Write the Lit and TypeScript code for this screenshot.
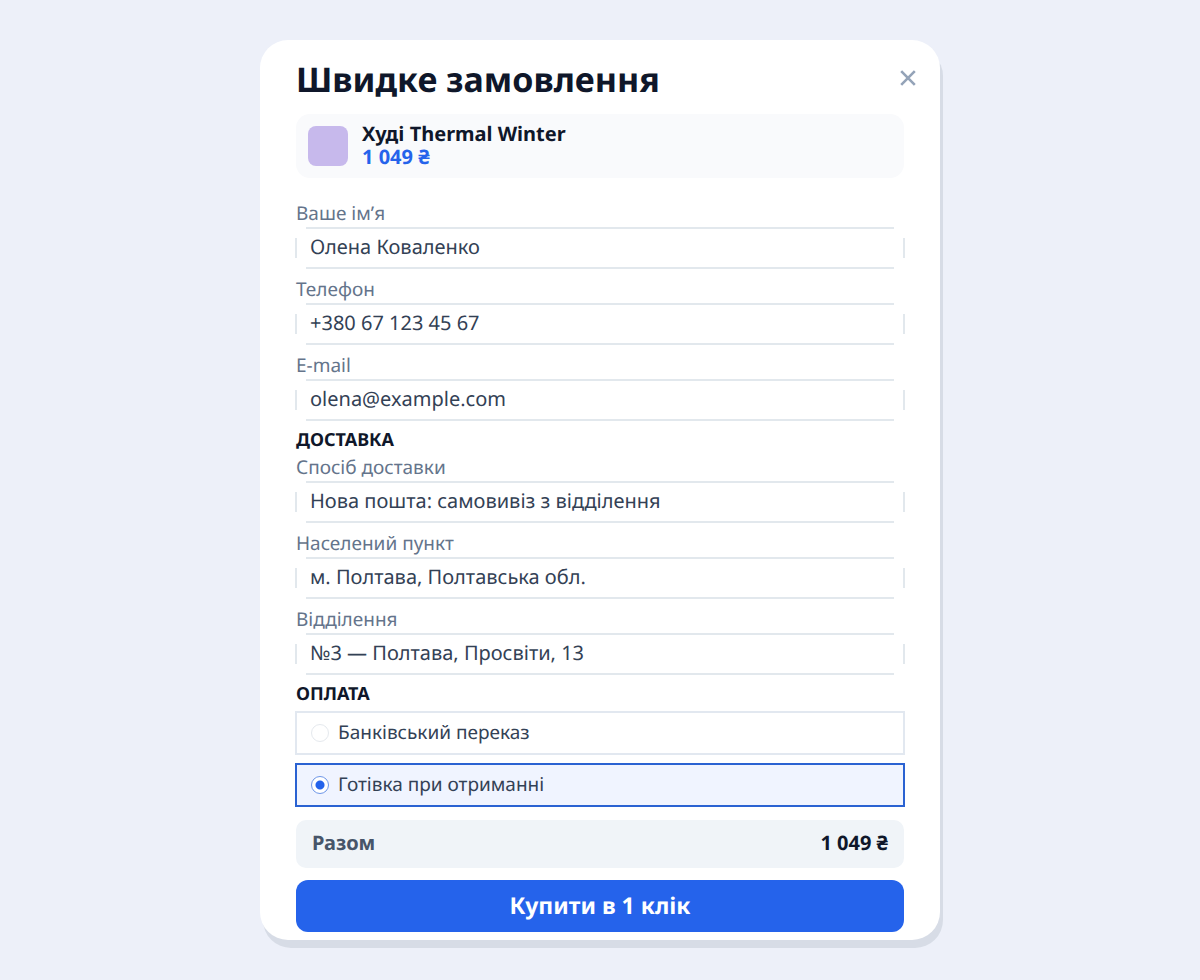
import { LitElement, html, css } from "lit";
import { customElement, property, state } from "lit/decorators.js";

@customElement("text-field")
class TextField extends LitElement {
  @property() label = "";
  @property() value = "";
  @property() type = "text";

  static styles = css`
    :host {
      display: block;
    }
    .label {
      display: block;
      padding: 8px 0 2px;
      font-size: 19px;
      line-height: 24px;
      color: #64748b;
    }
    .row {
      display: flex;
      margin: 0 -1px;
    }
    .input {
      flex: 1;
      min-width: 0;
      box-sizing: border-box;
      height: 42px;
      margin: 0;
      padding: 0 15px 4px;
      border: 0;
      border-radius: 10px;
      outline: 0;
      font: inherit;
      font-size: 20px;
      text-rendering: inherit;
      color: #334155;
      --line: linear-gradient(#e2e8ed, #e2e8ed);
      background:
        var(--line) center top / calc(100% - 22px) 2px no-repeat,
        var(--line) center bottom / calc(100% - 22px) 2px no-repeat,
        var(--line) left center / 2px 20px no-repeat,
        var(--line) right center / 2px 20px no-repeat;
    }
    .input:focus-visible {
      --line: linear-gradient(#2563eb, #2563eb);
    }
  `;

  render() {
    return html`
      <label class="label" for="control">${this.label}</label>
      <div class="row">
        <input class="input" id="control" type=${this.type} .value=${this.value} />
      </div>
    `;
  }
}

@customElement("app-root")
class AppRoot extends LitElement {
  @state() payment = "cash";

  contact = [
    { label: "Ваше ім’я", value: "Олена Коваленко", type: "text" },
    { label: "Телефон", value: "+380 67 123 45 67", type: "tel" },
    { label: "E-mail", value: "olena@example.com", type: "email" },
  ];

  delivery = [
    { label: "Спосіб доставки", value: "Нова пошта: самовивіз з відділення", type: "text" },
    { label: "Населений пункт", value: "м. Полтава, Полтавська обл.", type: "text" },
    { label: "Відділення", value: "№3 — Полтава, Просвіти, 13", type: "text" },
  ];

  payments = [
    { id: "bank", label: "Банківський переказ" },
    { id: "cash", label: "Готівка при отриманні" },
  ];

  static styles = css`
    :host {
      display: block;
      box-sizing: border-box;
      min-height: 100vh;
      padding: 40px 16px;
      background: #edf0f9;
      color: #0f172a;
      font-family: "Noto Sans", sans-serif;
      text-rendering: geometricPrecision;
    }
    .card {
      box-sizing: border-box;
      max-width: 680px;
      margin: 0 auto;
      padding: 19px 36px 8px;
      border-radius: 28px;
      background: #fff;
      box-shadow: 3px 8px 0 #d7dce6;
    }
    .header {
      display: flex;
      align-items: flex-start;
      justify-content: space-between;
      margin: 0 -16px 15px 0;
    }
    .title {
      margin: 0;
      font-size: 34px;
      line-height: 40px;
      font-weight: 700;
    }
    .close {
      display: flex;
      padding: 11px 4px;
      border: 0;
      background: none;
      color: #94a3b8;
      cursor: pointer;
    }
    .product {
      display: flex;
      align-items: center;
      gap: 14px;
      box-sizing: border-box;
      min-height: 64px;
      margin-bottom: 15px;
      padding: 0 12px;
      border-radius: 14px;
      background: #f9fafc;
    }
    .swatch {
      width: 40px;
      height: 40px;
      border-radius: 8px;
      background: #c7b9ec;
    }
    .info {
      padding-bottom: 2px;
      font-size: 20px;
      line-height: 23px;
      font-weight: 700;
    }
    .price {
      color: #2563eb;
    }
    .section {
      margin: 0;
      padding-top: 12px;
      font-size: 18px;
      line-height: 14px;
      font-weight: 700;
    }
    .payments {
      display: grid;
      gap: 8px;
      min-width: 0;
      margin: 10px -1px 13px;
      padding: 0;
      border: 0;
    }
    .option {
      display: flex;
      align-items: center;
      gap: 9px;
      box-sizing: border-box;
      height: 44px;
      padding: 0 14px;
      border: 2px solid #e2e8f0;
      font-size: 19px;
      color: #334155;
      cursor: pointer;
    }
    .option:has(.radio:checked) {
      border-color: #2a62d2;
      background: #f0f4ff;
    }
    .option-text {
      padding-bottom: 2px;
    }
    .radio {
      appearance: none;
      box-sizing: border-box;
      width: 18px;
      height: 18px;
      margin: 0;
      border: 1px solid #e5e9ee;
      border-radius: 50%;
      background: #fff;
    }
    .radio:checked {
      border-color: #6f97e8;
      background: radial-gradient(circle, #2563eb 4px, #fff 5px);
    }
    .total {
      display: flex;
      align-items: center;
      justify-content: space-between;
      box-sizing: border-box;
      height: 48px;
      margin-bottom: 12px;
      padding: 0 16px 3px;
      border-radius: 10px;
      background: #f0f4f8;
      font-size: 20px;
      font-weight: 700;
    }
    .total-label {
      color: #475569;
    }
    .buy {
      display: block;
      width: 100%;
      height: 52px;
      padding: 0 0 2px;
      border: 0;
      border-radius: 12px;
      background: #2563eb;
      color: #fff;
      font: inherit;
      font-size: 23px;
      font-weight: 700;
      text-rendering: inherit;
      cursor: pointer;
    }
  `;

  renderFields(fields) {
    return fields.map(
      (f) => html`<text-field .label=${f.label} .value=${f.value} .type=${f.type}></text-field>`,
    );
  }

  render() {
    return html`
      <form class="card" @submit=${(e) => e.preventDefault()}>
        <header class="header">
          <h1 class="title">Швидке замовлення</h1>
          <button class="close" type="button" aria-label="Закрити">
            <svg width="16" height="16" viewBox="0 0 16 16" fill="none" stroke="currentColor" stroke-width="2.6">
              <path d="M1.2 1.2 14.8 14.8M14.8 1.2 1.2 14.8" />
            </svg>
          </button>
        </header>

        <div class="product">
          <div class="swatch"></div>
          <div class="info">
            <div>Худі Thermal Winter</div>
            <div class="price">1 049 ₴</div>
          </div>
        </div>

        ${this.renderFields(this.contact)}
        <h2 class="section">ДОСТАВКА</h2>
        ${this.renderFields(this.delivery)}
        <h2 class="section" id="payment-title">ОПЛАТА</h2>

        <fieldset class="payments" aria-labelledby="payment-title">
          ${this.payments.map(
            (p) => html`
              <label class="option">
                <input
                  class="radio"
                  type="radio"
                  name="payment"
                  value=${p.id}
                  .checked=${this.payment === p.id}
                  @change=${() => (this.payment = p.id)}
                />
                <span class="option-text">${p.label}</span>
              </label>
            `,
          )}
        </fieldset>

        <div class="total">
          <span class="total-label">Разом</span>
          <span>1 049 ₴</span>
        </div>
        <button class="buy" type="submit">Купити в 1 клік</button>
      </form>
    `;
  }
}
